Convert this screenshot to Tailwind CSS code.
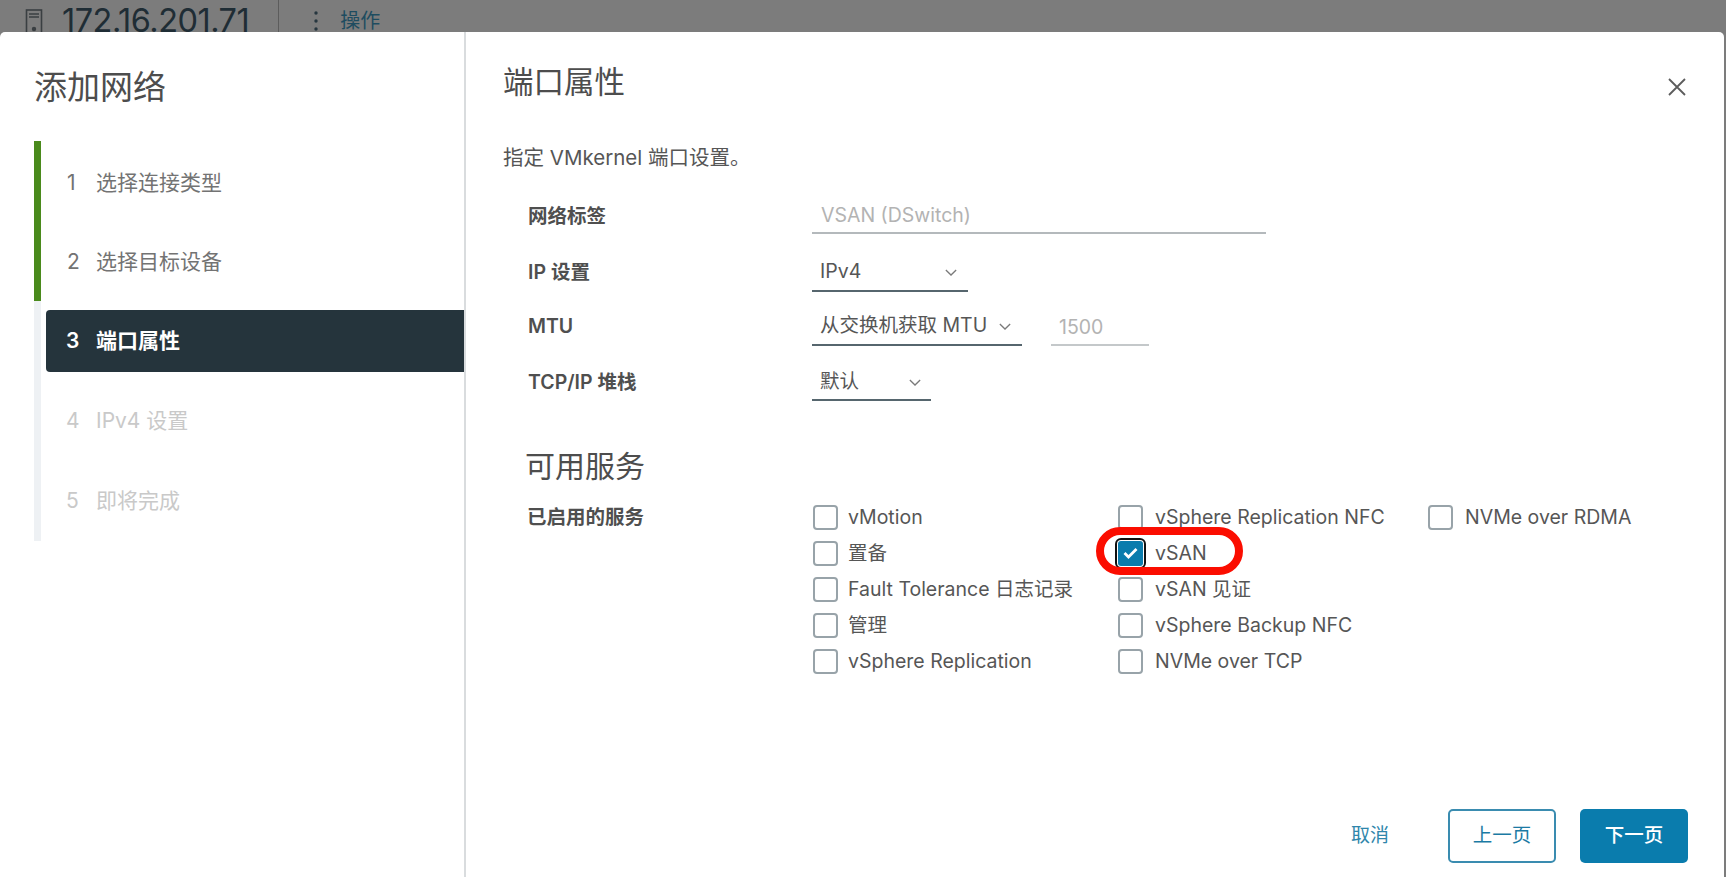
<!DOCTYPE html>
<html lang="zh-CN">
<head>
<meta charset="UTF-8" />
<title>添加网络</title>
<script src="https://cdn.jsdelivr.net/npm/@tailwindcss/browser@4"></script>
</head>
<body class="font-['Inter','Noto_Sans_CJK_SC',sans-serif] bg-[#7c7c7c] text-[#565656]">
<div class="relative w-[1726px] h-[877px] overflow-hidden">

  <!-- page header behind the dialog -->
  <header class="h-[32px] flex items-start overflow-hidden text-[#1f2d35]">
    <svg class="ml-[25px] mt-[9px] w-[19px] h-[24px] shrink-0" viewBox="0 0 19 24" fill="none" stroke="#3a3f42" stroke-width="1.6">
      <rect x="1.5" y="1" width="15" height="24" />
      <path d="M4 5h10M4 8h10" />
      <circle cx="9" cy="20" r="1.4" fill="#3a3f42" />
    </svg>
    <span class="ml-[18px] mt-[1px] text-[32.5px] leading-[40px] tracking-[-0.5px]">172.16.201.71</span>
    <div class="ml-[29px] w-px h-[32px] bg-[#5c5c5c]"></div>
    <svg class="ml-[35px] mt-[10px] w-[4px] h-[22px]" viewBox="0 0 4 22" fill="#26363f">
      <circle cx="2" cy="3" r="1.7" /><circle cx="2" cy="11" r="1.7" /><circle cx="2" cy="19" r="1.7" />
    </svg>
    <span class="ml-[22px] mt-[9px] text-[20px] leading-[24px] text-[#1e4c60]">操作</span>
  </header>

  <!-- dialog -->
  <div class="relative flex w-[1724px] h-[845px] bg-white rounded-t-[5px]">
    <aside class="w-[466px] shrink-0 border-r-2 border-[#d9dcde] pl-[34px]">
      <h1 class="mt-[33px] h-[44px] text-[33px] leading-[44px] text-[#4d4d4d]">添加网络</h1>
      <ol class="mt-[32px] text-[21px]">
        <li class="h-[81px] pt-[2px] border-l-[7px] border-[#4a8a1c] flex items-center pl-[26px] text-[#737373]"><span class="w-[29px]">1</span>选择连接类型</li>
        <li class="h-[79px] border-l-[7px] border-[#4a8a1c] flex items-center pl-[26px] text-[#737373]"><span class="w-[29px]">2</span>选择目标设备</li>
        <li class="h-[80px] border-l-[7px] border-[#eef1f4] flex items-center pl-[5px]">
          <div class="w-full h-[62px] bg-[#25343c] rounded-l-[4px] flex items-center pl-[20px] text-white font-semibold"><span class="w-[30px]">3</span>端口属性</div>
        </li>
        <li class="h-[80px] border-l-[7px] border-[#eef1f4] flex items-center pl-[25px] text-[#c9c9c9]"><span class="w-[30px]">4</span>IPv4 设置</li>
        <li class="h-[80px] border-l-[7px] border-[#eef1f4] flex items-center pl-[25px] text-[#c9c9c9]"><span class="w-[30px]">5</span>即将完成</li>
      </ol>
    </aside>

    <main class="flex-1 flex flex-col pl-[37px] pr-[36px]">
      <h2 class="mt-[30px] h-[40px] text-[30.5px] leading-[40px] text-[#4d4d4d]">端口属性</h2>
      <p class="mt-[44px] h-[24px] text-[20.5px] leading-[24px]">指定 VMkernel 端口设置。</p>

      <div class="mt-[28px] pl-[25px] text-[19.5px]">
        <div class="flex h-[36px]">
          <label class="w-[284px] flex items-center pt-[2px] font-semibold text-[#4f4f4f]">网络标签</label>
          <div class="w-[454px] border-b-2 border-[#b4b9bc] pl-[9px] pt-[2px] flex items-center text-[#b3b3b3]">VSAN (DSwitch)</div>
        </div>
        <div class="flex h-[36px] mt-[22px]">
          <label class="w-[284px] flex items-center font-semibold text-[#4f4f4f] pb-[2px]">IP 设置</label>
          <div class="w-[156px] border-b-2 border-[#56666e] pl-[8px] pb-[2px] flex items-center justify-between">IPv4
            <svg class="mr-[11px] w-[12px] h-[7px]" viewBox="0 0 14 8" fill="none" stroke="#7a7a7a" stroke-width="1.5"><path d="M1 1l6 6 6-6" /></svg>
          </div>
        </div>
        <div class="flex h-[36px] mt-[18px]">
          <label class="w-[284px] flex items-center font-semibold text-[#4f4f4f] pb-[2px]">MTU</label>
          <div class="w-[210px] border-b-2 border-[#56666e] pl-[8px] pb-[2px] flex items-center justify-between">从交换机获取 MTU
            <svg class="mr-[11px] w-[12px] h-[7px]" viewBox="0 0 14 8" fill="none" stroke="#7a7a7a" stroke-width="1.5"><path d="M1 1l6 6 6-6" /></svg>
          </div>
          <div class="ml-[29px] w-[98px] border-b-2 border-[#c4c8ca] pl-[8px] pt-[2px] flex items-center text-[#b3b3b3]">1500</div>
        </div>
        <div class="flex h-[36px] mt-[19px]">
          <label class="w-[284px] flex items-center font-semibold text-[#4f4f4f]">TCP/IP 堆栈</label>
          <div class="w-[119px] border-b-2 border-[#56666e] pl-[8px] flex items-center justify-between">默认
            <svg class="mr-[10px] w-[12px] h-[7px]" viewBox="0 0 14 8" fill="none" stroke="#7a7a7a" stroke-width="1.5"><path d="M1 1l6 6 6-6" /></svg>
          </div>
        </div>
      </div>

      <h3 class="mt-[45px] ml-[22px] h-[40px] text-[30px] leading-[40px] text-[#4d4d4d]">可用服务</h3>

      <div class="mt-[13px] ml-[24px] flex text-[19.5px]">
        <div class="w-[286px] h-[36px] pt-[2px] flex items-center font-semibold text-[#4f4f4f]">已启用的服务</div>
        <div class="grid grid-cols-[305px_310px_auto] grid-rows-[repeat(5,36px)] grid-flow-col items-center [&>div]:pt-[2px] [&>div>span]:-mt-[2px]">
          <div class="flex items-center gap-[10px]"><span class="w-[25px] h-[25px] border-2 border-[#98a3a9] rounded-[4px]"></span>vMotion</div>
          <div class="flex items-center gap-[10px]"><span class="w-[25px] h-[25px] border-2 border-[#98a3a9] rounded-[4px]"></span>置备</div>
          <div class="flex items-center gap-[10px]"><span class="w-[25px] h-[25px] border-2 border-[#98a3a9] rounded-[4px]"></span>Fault Tolerance 日志记录</div>
          <div class="flex items-center gap-[10px]"><span class="w-[25px] h-[25px] border-2 border-[#98a3a9] rounded-[4px]"></span>管理</div>
          <div class="flex items-center gap-[10px]"><span class="w-[25px] h-[25px] border-2 border-[#98a3a9] rounded-[4px]"></span>vSphere Replication</div>

          <div class="flex items-center gap-[12px]"><span class="w-[25px] h-[25px] border-2 border-[#98a3a9] rounded-[4px]"></span>vSphere Replication NFC</div>
          <div class="flex items-center gap-[12px]">
            <span class="w-[25px] h-[25px] bg-[#0a7cad] rounded-[3px] outline-[2px] outline-offset-[1px] outline-[#111] flex items-center justify-center">
              <svg class="w-[15px] h-[12px]" viewBox="0 0 15 12" fill="none" stroke="#fff" stroke-width="2.8"><path d="M1.5 6l4 4 8-8" /></svg>
            </span>vSAN
          </div>
          <div class="flex items-center gap-[12px]"><span class="w-[25px] h-[25px] border-2 border-[#98a3a9] rounded-[4px]"></span>vSAN 见证</div>
          <div class="flex items-center gap-[12px]"><span class="w-[25px] h-[25px] border-2 border-[#98a3a9] rounded-[4px]"></span>vSphere Backup NFC</div>
          <div class="flex items-center gap-[12px]"><span class="w-[25px] h-[25px] border-2 border-[#98a3a9] rounded-[4px]"></span>NVMe over TCP</div>

          <div class="flex items-center gap-[12px]"><span class="w-[25px] h-[25px] border-2 border-[#98a3a9] rounded-[4px]"></span>NVMe over RDMA</div>
        </div>
      </div>

      <footer class="mt-auto mb-[14px] flex items-center justify-end">
        <button class="mr-[59px] text-[19px] text-[#2f86ab]">取消</button>
        <button class="w-[108px] h-[54px] mr-[24px] border-2 border-[#3a8cb0] rounded-[5px] text-[19.5px] text-[#1b7aa4]">上一页</button>
        <button class="w-[108px] h-[54px] bg-[#0a7cad] rounded-[5px] text-[19.5px] text-white font-medium">下一页</button>
      </footer>
    </main>

    <!-- close button -->
    <button class="absolute right-[38px] top-[46px]">
      <svg class="w-[18px] h-[18px]" viewBox="0 0 18 18" fill="none" stroke="#5c5c5c" stroke-width="1.8"><path d="M1 1l16 16M17 1L1 17" /></svg>
    </button>
  </div>

  <!-- red annotation over the vSAN checkbox -->
  <div class="absolute left-[1096px] top-[527px] w-[147px] h-[48px] border-[8px] border-[#fb0d00] rounded-[24px]"></div>
</div>
</body>
</html>
